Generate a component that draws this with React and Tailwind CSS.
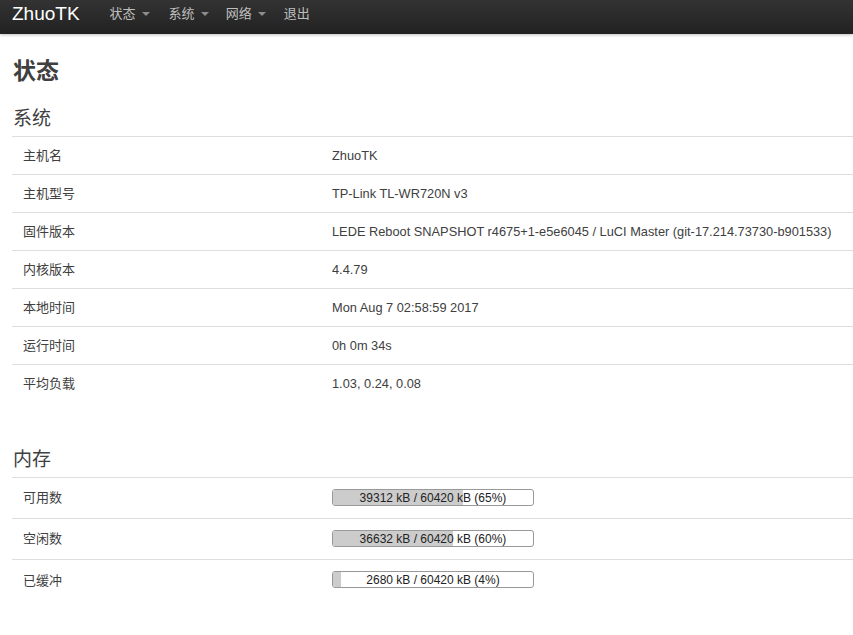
import React from 'react';

const font = { fontFamily: '"Liberation Sans", Arial, "Noto Sans CJK SC", sans-serif' };

const Caret = () => (
  <span className="ml-[6px] inline-block w-0 h-0 border-l-[4px] border-r-[4px] border-t-[4px] border-l-transparent border-r-transparent border-t-[#8c8c8c] align-middle" />
);

const systemRows = [
  ['主机名', 'ZhuoTK'],
  ['主机型号', 'TP-Link TL-WR720N v3'],
  ['固件版本', 'LEDE Reboot SNAPSHOT r4675+1-e5e6045 / LuCI Master (git-17.214.73730-b901533)'],
  ['内核版本', '4.4.79'],
  ['本地时间', 'Mon Aug 7 02:58:59 2017'],
  ['运行时间', '0h 0m 34s'],
  ['平均负载', '1.03, 0.24, 0.08'],
];

const memRows = [
  ['可用数', '39312 kB / 60420 kB (65%)', 65],
  ['空闲数', '36632 kB / 60420 kB (60%)', 60],
  ['已缓冲', '2680 kB / 60420 kB (4%)', 4],
];

const Bar = ({ text, pct }) => (
  <div className="relative w-[202px] h-[17px] border border-[#999] rounded-[3px] bg-white overflow-hidden -mt-[2px]">
    <div className="absolute left-0 top-0 bottom-0 bg-[#ccc]" style={{ width: pct + '%' }} />
    <div className="relative text-center text-[12px] leading-[16px] text-[#222]">{text}</div>
  </div>
);

export default function App() {
  return (
    <div className="min-h-screen bg-white text-[#404040]" style={font}>
      <div className="h-[34px] bg-gradient-to-b from-[#333] to-[#222] shadow-[0_1px_3px_rgba(0,0,0,0.25)] flex items-center">
        <div className="pl-[12px] pr-[20px] text-[19px] leading-none text-white -mt-[7px]">ZhuoTK</div>
        <div className="flex items-center text-[13px] text-[#bfbfbf] -mt-[7px] pl-[10px]">
          <span className="mr-[19px]">状态<Caret /></span>
          <span className="mr-[17px]">系统<Caret /></span>
          <span className="mr-[18px]">网络<Caret /></span>
          <span>退出</span>
        </div>
      </div>

      <div className="pl-[12px]">
        <h1 className="text-[23px] font-bold leading-none mt-[26px] ml-[1px] text-[#404040]">状态</h1>

        <h2 className="text-[19px] leading-none mt-[26px] ml-[1px] pb-[8px] text-[#404040]">系统</h2>
        <div className="border-t border-[#ddd]">
          {systemRows.map(([k, v], i) => (
            <div
              key={k}
              className={`flex items-center h-[38px] text-[13px] ${i < systemRows.length - 1 ? 'border-b border-[#ddd]' : ''}`}
            >
              <div className="w-[320px] pl-[11px]">{k}</div>
              <div className="whitespace-nowrap text-[12.8px]">{v}</div>
            </div>
          ))}
        </div>

        <h2 className="text-[19px] leading-none mt-[47px] ml-[1px] pb-[8px] text-[#404040]">内存</h2>
        <div className="border-t border-[#ddd]">
          {memRows.map(([k, v, p], i) => (
            <div
              key={k}
              className={`flex items-center h-[41px] text-[13px] ${i < memRows.length - 1 ? 'border-b border-[#ddd]' : ''}`}
            >
              <div className="w-[320px] pl-[11px]">{k}</div>
              <Bar text={v} pct={p} />
            </div>
          ))}
        </div>
      </div>
    </div>
  );
}
